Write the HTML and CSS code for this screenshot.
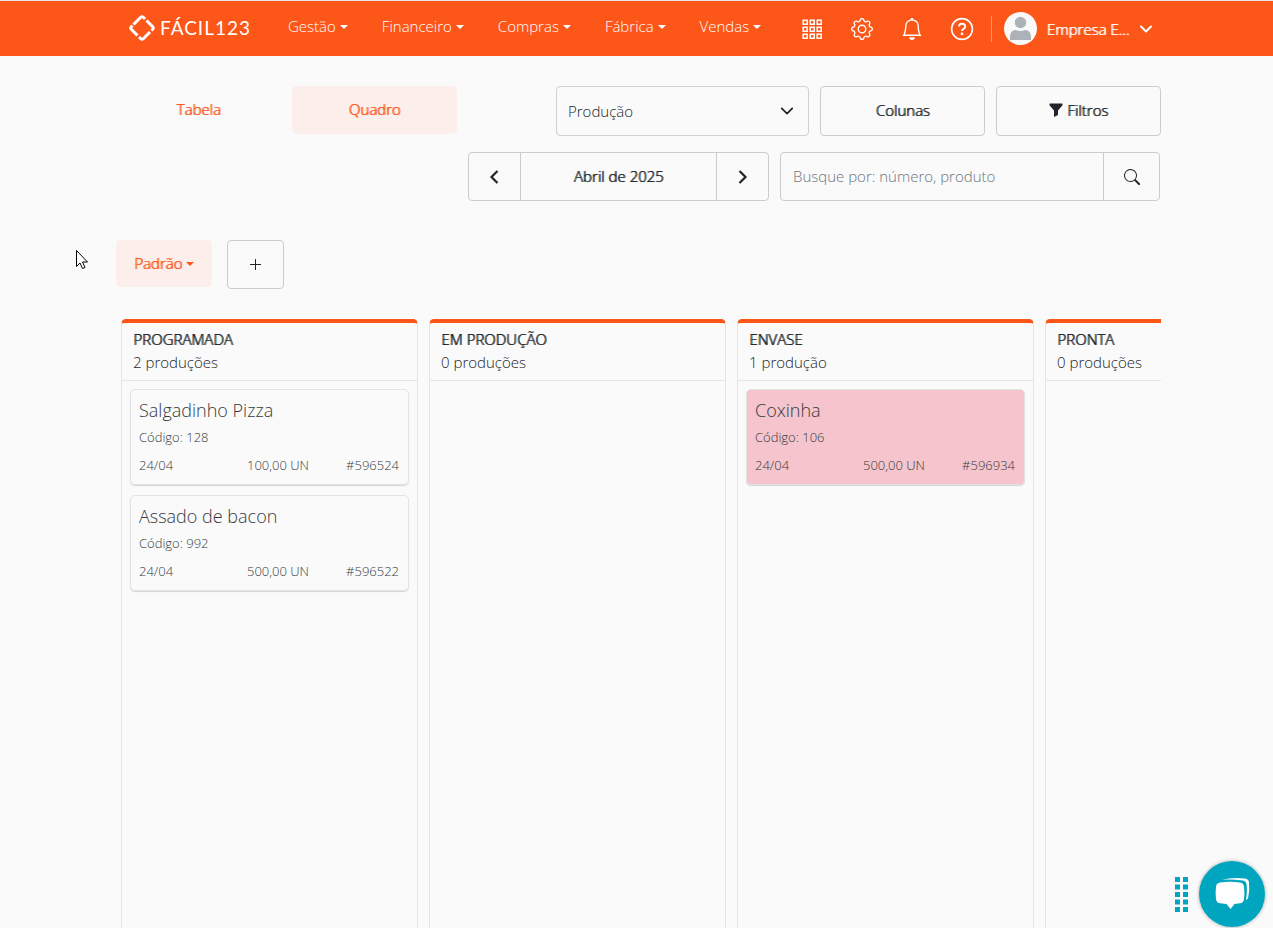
FILE: index.html
```html
<!DOCTYPE html>
<html lang="pt-BR">
<head>
    <meta charset="utf-8">
    <title>Produção - Fácil123</title>
    <meta name="viewport" content="width=device-width, initial-scale=1.0">
    <link rel="stylesheet" href="styles.css">
</head>
<body>
    <header class="topbar">
        <a href="#" class="logo">
            <svg width="28" height="28" viewBox="0 0 28 28" fill="none" stroke="#fff" stroke-width="3" stroke-linejoin="round">
                <path d="M5.500 10.500L12.500 3.500Q14 2 15.500 3.500L17 5"/>
                <path d="M18.500 6.500L24.500 12.500Q26 14 24.500 15.500L23.500 16.500"/>
                <path d="M22 18L15.500 24.500Q14 26 12.500 24.500L11 23"/>
                <path d="M9.500 21.500L3.500 15.500Q2 14 3.500 12.500L4.500 11.500"/>
            </svg>
            <span class="logo-text">FÁCIL123</span>
        </a>

        <nav class="menu">
            <a href="#" class="caret">Gestão</a>
            <a href="#" class="caret">Financeiro</a>
            <a href="#" class="caret">Compras</a>
            <a href="#" class="caret">Fábrica</a>
            <a href="#" class="caret">Vendas</a>
        </nav>

        <div class="icons">
            <button class="icon-btn" aria-label="Aplicativos">
                <svg width="24" height="24" viewBox="0 0 24 24" fill="none" stroke="#fff" stroke-width="1.5">
                    <path d="M3.2 3.2h4v4h-4zM10.2 3.2h4v4h-4zM17.2 3.2h4v4h-4zM3.2 10.2h4v4h-4zM10.2 10.2h4v4h-4zM17.2 10.2h4v4h-4zM3.2 17.2h4v4h-4zM10.2 17.2h4v4h-4zM17.2 17.2h4v4h-4z"/>
                </svg>
            </button>
            <button class="icon-btn" aria-label="Configurações">
                <svg width="22" height="22" viewBox="0 0 16 16" fill="#fff">
                    <path d="M8 4.754a3.246 3.246 0 1 0 0 6.492 3.246 3.246 0 0 0 0-6.492zM5.754 8a2.246 2.246 0 1 1 4.492 0 2.246 2.246 0 0 1-4.492 0z"/>
                    <path d="M9.796 1.343c-.527-1.79-3.065-1.79-3.592 0l-.094.319a.873.873 0 0 1-1.255.52l-.292-.16c-1.64-.892-3.433.902-2.54 2.541l.159.292a.873.873 0 0 1-.52 1.255l-.319.094c-1.79.527-1.79 3.065 0 3.592l.319.094a.873.873 0 0 1 .52 1.255l-.16.292c-.892 1.64.901 3.434 2.541 2.54l.292-.159a.873.873 0 0 1 1.255.52l.094.319c.527 1.79 3.065 1.79 3.592 0l.094-.319a.873.873 0 0 1 1.255-.52l.292.16c1.64.893 3.434-.902 2.54-2.541l-.159-.292a.873.873 0 0 1 .52-1.255l.319-.094c1.79-.527 1.79-3.065 0-3.592l-.319-.094a.873.873 0 0 1-.52-1.255l.16-.292c.893-1.64-.902-3.433-2.541-2.54l-.292.159a.873.873 0 0 1-1.255-.52l-.094-.319zm-2.633.283c.246-.835 1.428-.835 1.674 0l.094.319a1.873 1.873 0 0 0 2.693 1.115l.291-.16c.764-.415 1.6.42 1.184 1.185l-.159.292a1.873 1.873 0 0 0 1.116 2.692l.318.094c.835.246.835 1.428 0 1.674l-.319.094a1.873 1.873 0 0 0-1.115 2.693l.16.291c.415.764-.42 1.6-1.185 1.184l-.291-.159a1.873 1.873 0 0 0-2.693 1.116l-.094.318c-.246.835-1.428.835-1.674 0l-.094-.319a1.873 1.873 0 0 0-2.692-1.115l-.292.16c-.764.415-1.6-.42-1.184-1.185l.159-.291A1.873 1.873 0 0 0 1.945 8.93l-.319-.094c-.835-.246-.835-1.428 0-1.674l.319-.094A1.873 1.873 0 0 0 3.06 4.377l-.16-.292c-.415-.764.42-1.6 1.185-1.184l.292.159a1.873 1.873 0 0 0 2.692-1.115l.094-.319z"/>
                </svg>
            </button>
            <button class="icon-btn" aria-label="Notificações">
                <svg width="22" height="22" viewBox="0 0 16 16" fill="#fff">
                    <path d="M8 16a2 2 0 0 0 2-2H6a2 2 0 0 0 2 2zM8 1.918l-.797.161A4.002 4.002 0 0 0 4 6c0 .628-.134 2.197-.459 3.742-.16.767-.376 1.566-.663 2.258h10.244c-.287-.692-.502-1.49-.663-2.258C12.134 8.197 12 6.628 12 6a4.002 4.002 0 0 0-3.203-3.92L8 1.917zM14.22 12c.223.447.481.801.78 1H1c.299-.199.557-.553.78-1C2.68 10.2 3 6.88 3 6c0-2.42 1.72-4.44 4.005-4.901a1 1 0 1 1 1.99 0A5.002 5.002 0 0 1 13 6c0 .88.32 4.2 1.22 6z"/>
                </svg>
            </button>
            <button class="icon-btn" aria-label="Ajuda">
                <svg width="24" height="24" viewBox="0 0 24 24" fill="none" stroke="#fff">
                    <circle cx="12" cy="12" r="10.4" stroke-width="1.6"/>
                    <path d="M9 9.6 C9 5.8 15.2 5.9 15.2 9.4 C15.2 11.8 12 11.6 12 14" stroke-width="2"/>
                    <path d="M12 15.6v2.4" stroke-width="2.4"/>
                </svg>
            </button>
        </div>

        <button class="account">
            <svg width="33" height="33" viewBox="0 0 33 33">
                <circle cx="16.500" cy="16.500" r="16.500" fill="#fafafa"/>
                <circle cx="16.500" cy="10.500" r="5.800" fill="#adb2b8"/>
                <path d="M6 28v-3c0-4.500 2.500-7 6-7q4.500 2 9 0c3.500 0 6 2.500 6 7v3z" fill="#adb2b8"/>
            </svg>
            <span class="strong">Empresa E...</span>
            <svg width="14" height="10" viewBox="0 0 14 10" fill="none" stroke="#fff" stroke-width="2" stroke-linecap="round" stroke-linejoin="round">
                <path d="M2 2.500l5 5 5-5"/>
            </svg>
        </button>
    </header>

    <main class="content">
        <div class="toolbar">
            <div class="tabs">
                <button class="tab strong">Tabela</button>
                <button class="tab active strong">Quadro</button>
            </div>
            <div class="filters">
                <select class="field" aria-label="Tipo">
                    <option>Produção</option>
                </select>
                <button class="btn strong">Colunas</button>
                <button class="btn strong">
                    <svg width="14" height="14" viewBox="0 0 14 14" fill="#212529">
                        <path d="M.5.5h13v1.800L9 7.500v4.500l-4 2V7.500L.5 2.300z"/>
                    </svg>
                    Filtros
                </button>
            </div>
        </div>

        <div class="toolbar second">
            <div class="month">
                <button aria-label="Mês anterior">
                    <svg width="12" height="16" viewBox="0 0 12 16" fill="none" stroke="#212529" stroke-width="2.200">
                        <path d="M8.500 2L2.500 8l6 6"/>
                    </svg>
                </button>
                <button class="month-name strong">Abril de 2025</button>
                <button aria-label="Próximo mês">
                    <svg width="12" height="16" viewBox="0 0 12 16" fill="none" stroke="#212529" stroke-width="2.200">
                        <path d="M2.500 2l6 6-6 6"/>
                    </svg>
                </button>
            </div>
            <form class="search">
                <input type="text" placeholder="Busque por: número, produto" aria-label="Busca">
                <button type="button" aria-label="Buscar">
                    <svg width="16" height="16" viewBox="0 0 16 16" fill="#212529">
                        <path d="M11.742 10.344a6.500 6.500 0 1 0-1.397 1.398h-.001c.03.04.062.078.098.115l3.850 3.850a1 1 0 0 0 1.415-1.414l-3.850-3.850a1.007 1.007 0 0 0-.115-.1zM12 6.500a5.500 5.500 0 1 1-11 0 5.500 5.500 0 0 1 11 0z"/>
                    </svg>
                </button>
            </form>
        </div>

        <div class="views">
            <button class="view caret strong">Padrão</button>
            <button class="add" aria-label="Adicionar">
                <svg width="11" height="11" viewBox="0 0 11 11" stroke="#212529" stroke-width="1">
                    <path d="M5.500 0v11M0 5.500h11"/>
                </svg>
            </button>
        </div>

        <div class="board">
            <section class="column">
                <header class="column-head">
                    <h2 class="strong">PROGRAMADA</h2>
                    <p>2 produções</p>
                </header>
                <article class="card">
                    <h3>Salgadinho Pizza</h3>
                    <p>Código: 128</p>
                    <div class="card-info"><span>24/04</span><span>100,00 UN</span><span>#596524</span></div>
                </article>
                <article class="card">
                    <h3>Assado de bacon</h3>
                    <p>Código: 992</p>
                    <div class="card-info"><span>24/04</span><span>500,00 UN</span><span>#596522</span></div>
                </article>
            </section>
            <section class="column">
                <header class="column-head">
                    <h2 class="strong">EM PRODUÇÃO</h2>
                    <p>0 produções</p>
                </header>
            </section>
            <section class="column">
                <header class="column-head">
                    <h2 class="strong">ENVASE</h2>
                    <p>1 produção</p>
                </header>
                <article class="card late">
                    <h3>Coxinha</h3>
                    <p>Código: 106</p>
                    <div class="card-info"><span>24/04</span><span>500,00 UN</span><span>#596934</span></div>
                </article>
            </section>
            <section class="column">
                <header class="column-head">
                    <h2 class="strong">PRONTA</h2>
                    <p>0 produções</p>
                </header>
            </section>
        </div>
    </main>

    <div class="chat">
        <svg width="14" height="36" viewBox="0 0 14 36" fill="#00a5bf">
            <path d="M0 1h5v5H0zM8 1h5v5H8zM0 8.500h5v5H0zM8 8.500h5v5H8zM0 16h5v5H0zM8 16h5v5H8zM0 23.500h5v5H0zM8 23.500h5v5H8zM0 31h5v5H0zM8 31h5v5H8z"/>
        </svg>
        <button class="chat-btn" aria-label="Chat">
            <svg width="36" height="36" viewBox="0 0 36 36" fill="#fff">
                <path d="M6 6.500Q16 5 26 6.500Q29.500 7 30 10.500Q30.800 17 30 23Q29.500 27 26 27.300L20.500 28L16.500 33L12.500 28L6 27.300Q2.500 27 2 23Q1.200 17 2 10.500Q2.500 7 6 6.500z"/>
                <path d="M8 3.500Q19 1 31 2.500Q34.500 3 35 6Q36 14 34 22.500L32 24Q33.500 14 32.500 8Q32 5 29 4.500Q19 3 8 3.500z"/>
            </svg>
        </button>
    </div>

    <svg class="cursor" width="13" height="20" viewBox="0 0 13 20" fill="#fff" stroke="#000">
        <path d="M.5.5v16l3.500-3.500 2.500 5.500 2.500-1-2.500-5.500h5z"/>
    </svg>
</body>
</html>
```
FILE: styles.css
```css
* {
    box-sizing: border-box;
}

body {
    margin: 0;
    height: 100vh;
    display: flex;
    flex-direction: column;
    overflow: hidden;
    background-color: #fafafa;
    color: #212529;
    font-family: 'Open Sans', sans-serif;
    font-size: 15px;
    font-weight: 300;
    line-height: 24px;
}

button, input, select {
    font: inherit;
    color: inherit;
    background: transparent;
    border: 1px solid #ccc;
    padding: 0;
}

button {
    cursor: pointer;
}

svg {
    display: block;
    flex: none;
}

h2, h3, p {
    margin: 0;
    font-weight: 300;
}

/* Texto em destaque: fonte leve engrossada */
.strong {
    font-size: 15px;
    font-weight: 300;
    text-shadow: 1px 0 0 currentColor;
}

.caret::after {
    content: "";
    display: inline-block;
    margin-left: 4px;
    vertical-align: 3px;
    border-top: 4px solid;
    border-left: 4px solid transparent;
    border-right: 4px solid transparent;
}

/* Barra superior */
.topbar {
    display: flex;
    align-items: center;
    height: 56px;
    padding: 0 120px 0 128px;
    border-top: 1px solid #e4e4e4;
    background-color: #fc5619;
    color: #fff;
}

.logo {
    display: flex;
    align-items: center;
    gap: 4px;
    width: 160px;
    padding-bottom: 2px;
    color: #fff;
    text-decoration: none;
}

.logo-text {
    font-family: Lato, sans-serif;
    font-size: 19px;
    font-weight: 400;
    letter-spacing: 1px;
}

.menu {
    display: flex;
    gap: 34px;
    padding-bottom: 6px;
}

.menu a {
    color: #fff;
    text-decoration: none;
    white-space: nowrap;
}

.icons {
    display: flex;
    gap: 26px;
    margin-left: auto;
    padding-right: 17px;
    border-right: 1px solid #fd9a75;
}

.icon-btn {
    display: flex;
    align-items: center;
    justify-content: center;
    width: 24px;
    height: 26px;
    border: none;
}

.account {
    display: flex;
    align-items: center;
    gap: 10px;
    margin-left: 12px;
    border: none;
    white-space: nowrap;
}

/* Filtros */
.content {
    flex: 1;
    display: flex;
    flex-direction: column;
    min-height: 0;
    padding: 30px 112px 0 116px;
}

.toolbar {
    display: flex;
    justify-content: space-between;
}

.toolbar.second {
    justify-content: flex-end;
    gap: 11px;
    margin-top: 16px;
    padding-right: 1px;
}

.tabs, .filters {
    display: flex;
    gap: 11px;
}

.tab {
    width: 165px;
    height: 48px;
    border: none;
    border-radius: 5px;
    color: #fc5619;
}

.tab.active, .view {
    background-color: #fceeea;
}

.field {
    width: 253px;
    height: 50px;
    padding: 0 11px;
    border-color: #d0d0d0;
    border-radius: 4px;
    appearance: none;
    background: url("data:image/svg+xml,%3Csvg xmlns='http://www.w3.org/2000/svg' viewBox='0 0 16 16'%3E%3Cpath fill='none' stroke='%23212529' stroke-linecap='round' stroke-linejoin='round' stroke-width='2' d='M2 5l6 6 6-6'/%3E%3C/svg%3E") no-repeat right 14px center / 14px;
}

.btn {
    display: flex;
    align-items: center;
    justify-content: center;
    gap: 4px;
    width: 165px;
    height: 50px;
    border-radius: 4px;
}

.tab, .btn, .view, .month .month-name {
    padding-bottom: 2px;
}

.month {
    display: flex;
    border: 1px solid #ccc;
    border-radius: 4px;
}

.month button {
    display: flex;
    align-items: center;
    justify-content: center;
    width: 51px;
    height: 47px;
    border: none;
}

.month .month-name {
    width: 197px;
    border-left: 1px solid #ccc;
    border-right: 1px solid #ccc;
}

.search {
    display: flex;
    width: 380px;
    height: 49px;
    border: 1px solid #ccc;
    border-radius: 4px;
}

.search input {
    flex: 1;
    min-width: 0;
    padding: 0 12px 2px;
    border: none;
}

.search input::placeholder {
    color: #6c757d;
    opacity: 1;
}

.search button {
    display: flex;
    align-items: center;
    justify-content: center;
    width: 56px;
    border: none;
    border-left: 1px solid #ccc;
}

.views {
    display: flex;
    align-items: flex-start;
    gap: 15px;
    margin-top: 39px;
}

.view {
    width: 96px;
    height: 47px;
    border: none;
    border-radius: 5px;
    color: #fc5619;
}

.add {
    display: flex;
    align-items: center;
    justify-content: center;
    width: 57px;
    height: 49px;
    border-radius: 4px;
}

/* Quadro */
.board {
    flex: 1;
    display: flex;
    gap: 11px;
    margin-top: 30px;
    padding-left: 5px;
    overflow: hidden;
}

.column {
    flex: none;
    width: 297px;
    border: 1px solid #e4e5e6;
    border-top: 4px solid #fc5619;
    border-bottom: none;
    border-radius: 5px 5px 0 0;
}

.column-head {
    height: 58px;
    padding: 5px 11px 0;
    border-bottom: 1px solid #e4e5e6;
}

.column-head h2, .column-head p {
    line-height: 23px;
}

.card {
    height: 96px;
    margin: 8px 8px 10px;
    padding: 7px 9px 8px 8px;
    border: 1px solid #e2e3e5;
    border-radius: 5px;
    box-shadow: 0 1px 1px rgba(0, 0, 0, 0.15);
    color: #343a40;
    font-size: 13px;
}

.card h3 {
    font-size: 18px;
    line-height: 26px;
}

.card p {
    line-height: 28px;
}

.card-info {
    display: grid;
    grid-template-columns: 1fr auto 90px;
    line-height: 28px;
}

.card-info span:last-child {
    text-align: right;
}

.card.late {
    background-color: #f5c4cc;
}

/* Chat */
.chat {
    position: fixed;
    right: 8px;
    bottom: 1px;
    display: flex;
    align-items: center;
    gap: 10px;
}

.chat-btn {
    display: flex;
    align-items: center;
    justify-content: center;
    width: 66px;
    height: 66px;
    border: none;
    border-radius: 50%;
    background-color: #00a5bf;
    box-shadow: 0 0 3px 1px rgba(0, 0, 0, 0.2);
}

.cursor {
    position: absolute;
    left: 76px;
    top: 250px;
}
```
